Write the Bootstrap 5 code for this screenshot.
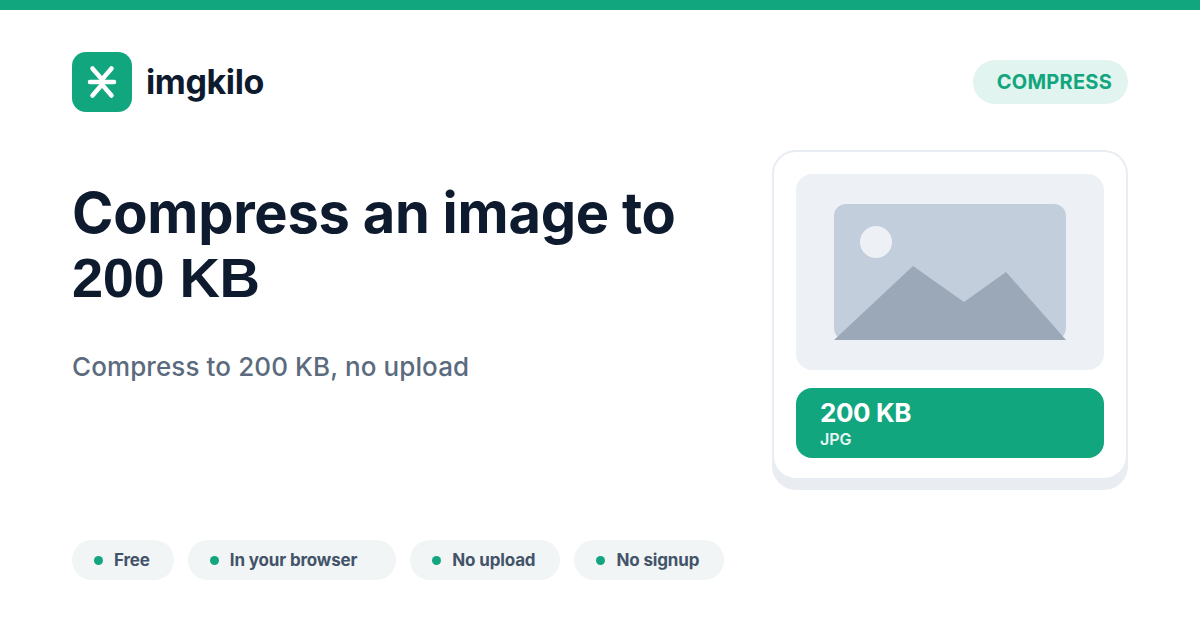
<!DOCTYPE html>
<html lang="en">
<head>
<meta charset="utf-8">
<title>imgkilo</title>
<link href="https://cdn.jsdelivr.net/npm/bootstrap@5.3.0/dist/css/bootstrap.min.css" rel="stylesheet">
<style>
html,body{width:1200px;height:630px;overflow:hidden;background:#fff;}
body{font-family:Inter,"Liberation Sans",sans-serif;color:#0e1a2e;}
.topbar{height:10px;background:#12a67f;}
.page{padding:42px 72px 0;}
.header{height:60px;}
.logo{width:60px;height:60px;border-radius:14px;background:#12a67f;}
.wordmark{font-size:34px;font-weight:700;letter-spacing:-.4px;line-height:60px;margin-left:14px;}
.kind{height:44px;margin-top:8px;border-radius:22px;background:#e2f4ef;color:#12a67f;font-size:20px;font-weight:700;letter-spacing:.25px;line-height:44px;padding:0 16px 0 24px;}
.main{margin-top:38px;height:340px;}
.title{font-size:56px;font-weight:700;line-height:64px;letter-spacing:-.25px;margin:31px 0 0;color:#0e1a2e;}
.num{font-family:"Liberation Sans",Arial,sans-serif;letter-spacing:-.4px;}
.sub{font-size:26px;line-height:32px;font-weight:500;letter-spacing:.1px;color:#5b6b7d;margin:41px 0 0;}
.panel{width:356px;height:330px;border:2px solid #e8edf3;border-radius:24px;background:#fff;box-shadow:0 10px 0 #e9edf2;padding:22px 22px 0;}
.preview{height:196px;border-radius:16px;background:#edf1f6;padding-top:30px;}
.preview svg{display:block;margin:0 auto;}
.size{height:70px;margin-top:18px;border-radius:16px;background:#12a67f;color:#fff;padding:10px 24px;}
.size-num{font-size:26px;font-weight:700;line-height:30px;letter-spacing:-.4px;}
.size-fmt{font-size:16px;font-weight:600;line-height:20px;margin-top:1px;opacity:.9;}
.chips{margin-top:50px;gap:14px;}
.chip{height:40px;border-radius:20px;background:#f1f5f5;padding:0 25px 0 22px;font-size:17px;font-weight:700;letter-spacing:-.15px;line-height:40px;color:#43536a;}
.chip-narrow{padding-right:24px;}
.chip-wide{padding-right:39px;}
.dot{width:9px;height:9px;border-radius:50%;background:#12a67f;margin-right:11px;}
</style>
</head>
<body>
<div class="topbar"></div>
<div class="page">
  <div class="header d-flex justify-content-between align-items-start">
    <div class="d-flex align-items-center">
      <div class="logo d-flex align-items-center justify-content-center">
        <svg width="60" height="60" viewBox="0 0 60 60" fill="none" stroke="#fff" stroke-linecap="round" stroke-linejoin="round" stroke-width="4.5"><path d="M18 30H42"/><path d="M20.500 16.500L30 27.500 39.500 16.500M20.500 43.500L30 32.500 39.500 43.500"/></svg>
      </div>
      <div class="wordmark">imgkilo</div>
    </div>
    <div class="kind">COMPRESS</div>
  </div>
  <div class="main d-flex justify-content-between">
    <div>
      <h1 class="title">Compress an image to<br><span class="num">200 KB</span></h1>
      <p class="sub">Compress to 200 KB, no upload</p>
    </div>
    <div class="panel">
      <div class="preview">
        <svg width="232" height="136" viewBox="0 0 232 136">
          <rect width="232" height="136" rx="12" fill="#c2cedc"/>
          <circle cx="42" cy="38" r="16" fill="#edf1f6"/>
          <path d="M0 136L79 62 130 98 172 68 232 136Z" fill="#9ba8b8"/>
        </svg>
      </div>
      <div class="size">
        <div class="size-num">200 KB</div>
        <div class="size-fmt">JPG</div>
      </div>
    </div>
  </div>
  <div class="chips d-flex">
    <div class="chip chip-narrow d-flex align-items-center"><span class="dot"></span>Free</div>
    <div class="chip chip-wide d-flex align-items-center"><span class="dot"></span>In your browser</div>
    <div class="chip d-flex align-items-center"><span class="dot"></span>No upload</div>
    <div class="chip d-flex align-items-center"><span class="dot"></span>No signup</div>
  </div>
</div>
<script src="https://cdn.jsdelivr.net/npm/bootstrap@5.3.0/dist/js/bootstrap.bundle.min.js"></script>
</body>
</html>
